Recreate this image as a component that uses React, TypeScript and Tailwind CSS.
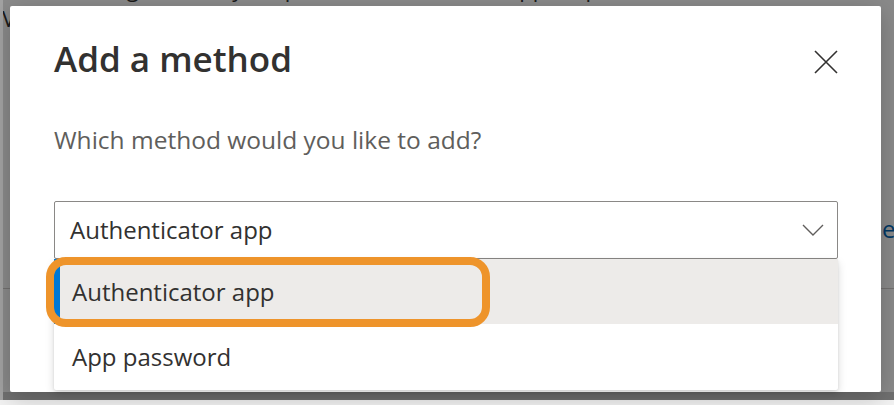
import React from "react";

const options = ["Authenticator app", "App password"];

const App: React.FC = () => {
  return (
    <div className="relative h-[405px] w-[894px] overflow-hidden bg-white font-['Open_Sans','Liberation_Sans',sans-serif]">
      {/* page behind the dialog */}
      <div className="absolute inset-0">
        <p className="-mt-[27px] ml-[24px] whitespace-nowrap text-[22px] leading-[30px] text-[#323130]">
          You can sign in with your phone, authenticator app, or password.
        </p>
        <p className="ml-[2px] whitespace-nowrap text-[22px] leading-[30px] text-[#323130]">
          View and manage your sign-in methods
        </p>
        <div className="absolute left-0 right-0 top-[288px] border-t border-[#d2d0ce]" />
        <span className="absolute left-[882px] top-[211px] text-[24px] text-[#0067b8]">e</span>
        <div className="absolute bottom-[5px] left-0 right-0 h-[8px] bg-[#cfcfcf]" />
      </div>
      <div className="absolute inset-0 bg-black/[0.46]" />
      <div className="absolute left-0 top-0 h-full w-[3px] bg-[#a3a3a3]" />
      <div className="absolute bottom-0 left-0 h-[5px] w-full bg-[#f3f3f3]" />

      {/* dialog */}
      <div className="absolute left-[10px] top-[6px] h-[386px] w-[871px] rounded-[2px] bg-white shadow-[0_6px_24px_rgba(0,0,0,0.22)]">
        <div className="flex flex-col pl-[44px] pr-[43px] pt-[31px]">
          <div className="flex items-start justify-between">
            <h2 className="text-[35px] font-semibold leading-[44px] text-[#323130]">
              Add a method
            </h2>
            <button className="mt-[13px] flex h-[24px] w-[24px] items-center justify-center text-[#323130]">
              <svg width="24" height="24" viewBox="0 0 24 24" fill="none" stroke="currentColor" strokeWidth="1.6">
                <path d="M1 1 L23 23 M23 1 L1 23" />
              </svg>
            </button>
          </div>

          <p className="mt-[43px] text-[24.5px] leading-[32px] text-[#605e5c]">
            Which method would you like to add?
          </p>

          <div className="relative mt-[45px]">
            <div className="flex h-[58px] items-center justify-between rounded-[2px] border border-[#8a8886] pl-[15px] pr-[13px]">
              <span className="text-[24px] text-[#323130]">Authenticator app</span>
              <svg width="22" height="12" viewBox="0 0 22 12" fill="none" stroke="#605e5c" strokeWidth="1.4">
                <path d="M1 1 L11 11 L21 1" />
              </svg>
            </div>

            <div className="flex flex-col rounded-b-[2px] bg-white shadow-[0_4px_10px_rgba(0,0,0,0.14),0_1px_3px_rgba(0,0,0,0.1)]">
              {options.map((opt, i) => (
                <div
                  key={opt}
                  className={
                    i === 0
                      ? "flex h-[65px] items-center border-l-[6px] border-[#0078d4] bg-[#edebe9] pl-[12px] text-[24px] text-[#323130]"
                      : "flex h-[66px] items-center pl-[18px] text-[24px] text-[#323130]"
                  }
                >
                  {opt}
                </div>
              ))}
            </div>

            {/* highlight ring */}
            <div className="pointer-events-none absolute left-[-8px] top-[56px] h-[70px] w-[444px] rounded-[20px] border-[8px] border-[#ee942b]" />
          </div>
        </div>
      </div>
    </div>
  );
};

export default App;
